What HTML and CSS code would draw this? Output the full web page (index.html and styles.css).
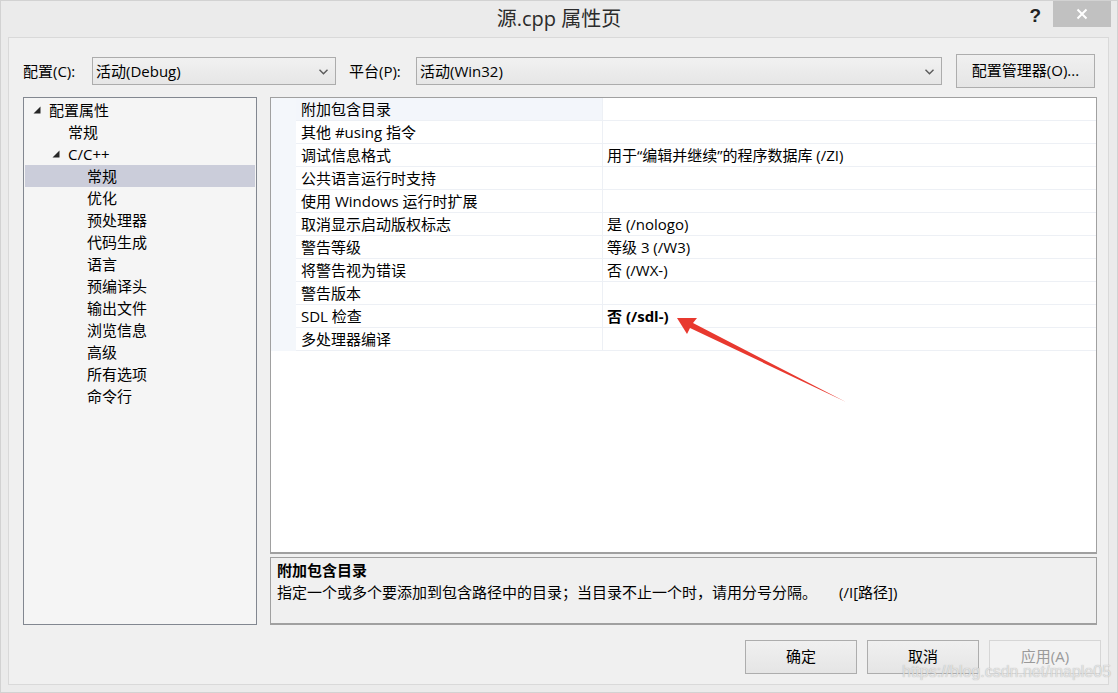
FILE: index.html
```html
<!DOCTYPE html>
<html lang="zh-cn">
<head>
    <meta charset="UTF-8">
    <title>源.cpp 属性页</title>
    <link rel="stylesheet" href="styles.css">
</head>
<body>
    <div class="window">
        <div class="titlebar">
            <div></div>
            <div class="title">源.cpp 属性页</div>
            <div class="caption-btns">
                <span class="help">?</span>
                <span class="close">
                    <svg width="12" height="12" viewBox="0 0 12 12"><path d="M1.5 1.5 L10.5 10.5 M10.5 1.5 L1.5 10.5" stroke="#fff" stroke-width="2"/></svg>
                </span>
            </div>
        </div>

        <div class="client">
            <div class="toolbar">
                <span class="lbl lbl-config">配置(C):</span>
                <div class="combo combo-config">
                    <span>活动(Debug)</span>
                    <svg class="chev" width="9" height="6" viewBox="0 0 9 6"><path d="M0.5 0.8 L4.5 4.8 L8.5 0.8" fill="none" stroke="#5a5a5a" stroke-width="1.4"/></svg>
                </div>
                <span class="lbl lbl-platform">平台(P):</span>
                <div class="combo combo-platform">
                    <span>活动(Win32)</span>
                    <svg class="chev" width="9" height="6" viewBox="0 0 9 6"><path d="M0.5 0.8 L4.5 4.8 L8.5 0.8" fill="none" stroke="#5a5a5a" stroke-width="1.4"/></svg>
                </div>
                <button class="btn btn-manager">配置管理器(O)...</button>
            </div>

            <div class="main">
                <div class="tree">
                    <div class="node lv0"><span class="tog"><svg width="8" height="8" viewBox="0 0 8 8"><polygon points="7.5,0.5 7.5,7.5 0.5,7.5" fill="#262626"/></svg></span>配置属性</div>
                    <div class="node lv1"><span class="tog"></span>常规</div>
                    <div class="node lv1"><span class="tog"><svg width="8" height="8" viewBox="0 0 8 8"><polygon points="7.5,0.5 7.5,7.5 0.5,7.5" fill="#262626"/></svg></span>C/C++</div>
                    <div class="node lv2 selected"><span class="tog"></span>常规</div>
                    <div class="node lv2"><span class="tog"></span>优化</div>
                    <div class="node lv2"><span class="tog"></span>预处理器</div>
                    <div class="node lv2"><span class="tog"></span>代码生成</div>
                    <div class="node lv2"><span class="tog"></span>语言</div>
                    <div class="node lv2"><span class="tog"></span>预编译头</div>
                    <div class="node lv2"><span class="tog"></span>输出文件</div>
                    <div class="node lv2"><span class="tog"></span>浏览信息</div>
                    <div class="node lv2"><span class="tog"></span>高级</div>
                    <div class="node lv2"><span class="tog"></span>所有选项</div>
                    <div class="node lv2"><span class="tog"></span>命令行</div>
                </div>

                <div class="right">
                    <div class="grid">
                        <div class="row current"><div class="gutter"></div><div class="name">附加包含目录</div><div class="value"></div></div>
                        <div class="row"><div class="gutter"></div><div class="name">其他 #using 指令</div><div class="value"></div></div>
                        <div class="row"><div class="gutter"></div><div class="name">调试信息格式</div><div class="value">用于“编辑并继续”的程序数据库 (/ZI)</div></div>
                        <div class="row"><div class="gutter"></div><div class="name">公共语言运行时支持</div><div class="value"></div></div>
                        <div class="row"><div class="gutter"></div><div class="name">使用 Windows 运行时扩展</div><div class="value"></div></div>
                        <div class="row"><div class="gutter"></div><div class="name">取消显示启动版权标志</div><div class="value">是 (/nologo)</div></div>
                        <div class="row"><div class="gutter"></div><div class="name">警告等级</div><div class="value">等级 3 (/W3)</div></div>
                        <div class="row"><div class="gutter"></div><div class="name">将警告视为错误</div><div class="value">否 (/WX-)</div></div>
                        <div class="row"><div class="gutter"></div><div class="name">警告版本</div><div class="value"></div></div>
                        <div class="row"><div class="gutter"></div><div class="name">SDL 检查</div><div class="value bold">否 (/sdl-)</div></div>
                        <div class="row"><div class="gutter"></div><div class="name">多处理器编译</div><div class="value"></div></div>
                    </div>
                    <div class="desc">
                        <div class="desc-title">附加包含目录</div>
                        <div class="desc-text">指定一个或多个要添加到包含路径中的目录；当目录不止一个时，请用分号分隔。<span class="switch">(/I[路径])</span></div>
                    </div>
                </div>
            </div>

            <div class="buttons">
                <button class="btn">确定</button>
                <button class="btn">取消</button>
                <button class="btn disabled">应用(A)</button>
            </div>
        </div>
    </div>

    <!-- annotation drawn over the screenshot -->
    <svg class="arrow" width="1118" height="693" viewBox="0 0 1118 693">
        <polygon points="677,318 697,318 693,323 846,402 690,328 687,334" fill="#e8392f"/>
    </svg>
    <div class="watermark">https://blog.csdn.net/maple05</div>
</body>
</html>
```

FILE: styles.css
```css
* {
    box-sizing: border-box;
}
html, body {
    margin: 0;
    padding: 0;
}
body {
    font-family: "Open Sans", "Noto Sans CJK SC", sans-serif;
    font-size: 15px;
    color: #000;
    background: #ebebeb;
}
.window {
    width: 1118px;
    height: 693px;
    border: 1px solid #d2d2d2;
    background: #ebebeb;
    overflow: hidden;
}
.titlebar {
    height: 36px;
    display: grid;
    grid-template-columns: 1fr auto 1fr;
}
.title {
    font-family: "Segoe UI", "Open Sans", "Noto Sans CJK SC", sans-serif;
    font-size: 20px;
    line-height: 36px;
    color: #2b2b2b;
}
.caption-btns {
    display: flex;
    justify-content: flex-end;
    align-items: flex-start;
    padding-right: 6px;
}
.help {
    font-family: "Liberation Sans", sans-serif;
    font-weight: bold;
    font-size: 19px;
    line-height: 26px;
    color: #222;
    margin-right: 12px;
    margin-top: 2px;
}
.close {
    width: 58px;
    height: 26px;
    background: #c1c1c1;
    display: flex;
    align-items: center;
    justify-content: center;
}
.client {
    margin: 0 8px 7px 7px;
    height: 648px;
    border: 1px solid #d9d9d9;
    background: #f0f0f0;
    padding: 16px 11px 0 14px;
}
.toolbar {
    display: flex;
    align-items: center;
    height: 34px;
    margin-bottom: 9px;
}
.lbl {
    white-space: nowrap;
    margin-top: -2px;
}
.lbl-config {
    width: 69px;
}
.lbl-platform {
    width: 67px;
    margin-left: 13px;
}
.combo {
    height: 28px;
    border: 1px solid #acacac;
    background: linear-gradient(#f1f1f1, #e6e6e6);
    display: flex;
    align-items: center;
    justify-content: space-between;
    padding: 0 7px 2px 3px;
}
.combo-config {
    width: 244px;
}
.combo-platform {
    width: 526px;
}
.chev {
    margin-top: 3px;
}
.btn {
    font-family: inherit;
    font-size: 15px;
    color: #000;
    height: 34px;
    border: 1px solid #adadad;
    background: linear-gradient(#f0f0f0, #e5e5e5);
    padding: 0 0 3px;
}
.btn-manager {
    width: 139px;
    margin-left: 14px;
}
.main {
    display: flex;
    height: 528px;
}
.tree {
    width: 234px;
    border: 1px solid #828790;
    background: #f5f5f5;
    padding: 1px;
}
.node {
    height: 22px;
    line-height: 22px;
    display: flex;
    align-items: center;
    white-space: nowrap;
}
.tog {
    width: 16px;
    display: flex;
    align-items: center;
}
.lv0 {
    padding-left: 8px;
}
.lv1 {
    padding-left: 27px;
}
.lv2 {
    padding-left: 46px;
}
.node.selected {
    background: #cbcdda;
}
.right {
    flex: 1;
    margin-left: 13px;
    display: flex;
    flex-direction: column;
}
.grid {
    height: 457px;
    border: 1px solid #a0a0a0;
    border-bottom-width: 2px;
    background: #fff;
}
.row {
    display: flex;
    height: 23px;
    line-height: 22px;
}
.gutter {
    width: 25px;
    background: #f4f7fb;
}
.name {
    width: 307px;
    padding-left: 5px;
    border-right: 1px solid #edf0f5;
    border-bottom: 1px solid #edf0f5;
    white-space: nowrap;
}
.value {
    flex: 1;
    padding-left: 4px;
    border-bottom: 1px solid #edf0f5;
    white-space: nowrap;
}
.row.current .name {
    background: #f3f6fb;
}
.bold {
    font-weight: bold;
}
.desc {
    margin-top: 3px;
    height: 68px;
    border: 1px solid #a0a0a0;
    border-bottom-width: 2px;
    background: #f0f0f0;
    padding: 1px 6px;
    line-height: 22px;
}
.desc-title {
    font-weight: bold;
}
.switch {
    margin-left: 22px;
}
.buttons {
    display: flex;
    justify-content: flex-end;
    gap: 10px;
    margin-top: 15px;
    margin-right: -4px;
}
.buttons .btn {
    width: 112px;
}
.btn.disabled {
    border-color: #d6d6d6;
    background: #f2f2f2;
    color: #9a9a9a;
}
.arrow {
    position: absolute;
    left: 0;
    top: 0;
    pointer-events: none;
}
.watermark {
    position: absolute;
    left: 902px;
    top: 663px;
    font-family: "Liberation Sans", Arial, sans-serif;
    font-size: 16px;
    color: rgba(235, 235, 235, 0.85);
    text-shadow: 0 0 1px rgba(120, 120, 120, 0.6);
    pointer-events: none;
}
```
